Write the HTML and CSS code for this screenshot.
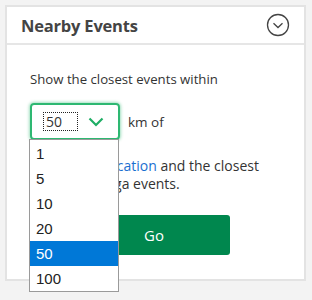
FILE: index.html
```html
<!DOCTYPE html>
<html>
<head>
<meta charset="utf-8">
<link rel="stylesheet" href="styles.css">
</head>
<body>
<div class="card">
  <div class="card-header">
    <h2 class="title">Nearby Events</h2>
    <svg class="toggle" width="24" height="24" viewBox="0 0 24 24">
      <circle cx="12" cy="12" r="10.5" fill="none" stroke="#444" stroke-width="1.3"/>
      <path d="M7.5 10.2 L12 14.5 L16.5 10.2" fill="none" stroke="#444" stroke-width="1.3"/>
    </svg>
  </div>
  <div class="card-body">
    <p class="intro">Show the closest events within</p>
    <div class="select-row">
      <div class="select-wrap">
        <div class="select">
          <span class="value">50</span>
          <svg class="chev" width="16" height="10" viewBox="0 0 16 10">
            <path d="M1.5 1.5 L8 8 L14.5 1.5" fill="none" stroke="#1fae65" stroke-width="2.2"/>
          </svg>
        </div>
        <ul class="dropdown">
          <li>1</li>
          <li>5</li>
          <li>10</li>
          <li>20</li>
          <li class="selected">50</li>
          <li>100</li>
        </ul>
      </div>
      <span class="unit">km of</span>
    </div>
    <p class="desc">your home <a href="#">location</a> and the closest upcoming yoga events.</p>
    <div class="actions">
      <button class="go">Go</button>
    </div>
  </div>
</div>
</body>
</html>
```
FILE: styles.css
```css
html, body {
  margin: 0;
  padding: 0;
}
body {
  background: #f3f3f3;
  padding: 5px;
  min-height: 300px;
  box-sizing: border-box;
  font-family: "Open Sans", "Segoe UI", sans-serif;
  color: #333;
}
.card {
  width: 297px;
  height: 272px;
  background: #fff;
  border: 2px solid #e3e3e3;
}
.card-header {
  height: 36px;
  display: flex;
  align-items: center;
  justify-content: space-between;
  padding: 0 14px 0 14px;
  border-bottom: 2px solid #e6e6e6;
}
.title {
  margin: 0;
  font-size: 16.5px;
  font-weight: 700;
  color: #444;
  letter-spacing: -0.2px;
}
.toggle {
  display: block;
}
.card-body {
  padding: 24px 23px;
}
.intro {
  margin: 0;
  font-size: 13.2px;
  line-height: 20px;
}
.select-row {
  display: flex;
  align-items: center;
  gap: 8px;
  margin-top: 14px;
}
.select-wrap {
  position: relative;
}
.select {
  box-sizing: border-box;
  width: 90px;
  height: 37px;
  border: 2px solid #2eb872;
  border-radius: 4px;
  box-shadow: 0 0 3px 1px rgba(46, 184, 114, 0.45);
  display: flex;
  align-items: center;
  justify-content: space-between;
  padding: 0 12px 0 12px;
}
.value {
  font-size: 14px;
  outline: 1px dotted #222;
  width: 33px;
  line-height: 17px;
  padding-left: 2px;
  box-sizing: border-box;
}
.chev {
  display: block;
  margin-right: 2px;
}
.unit {
  font-size: 13.5px;
}
.dropdown {
  position: absolute;
  left: -1px;
  top: 36px;
  width: 88px;
  margin: 0;
  padding: 1px 0 0 0;
  list-style: none;
  background: #fff;
  border: 1px solid #9a9a9a;
  z-index: 5;
  font-family: "Liberation Sans", Arial, sans-serif;
}
.dropdown li {
  height: 25px;
  line-height: 25px;
  padding-left: 6px;
  font-size: 15px;
  color: #222;
}
.dropdown li.selected {
  background: #0078d7;
  color: #fff;
}
.desc {
  margin: 17px 0 0 0;
  font-size: 14px;
  line-height: 18px;
}
.desc a {
  color: #1a6fd0;
  text-decoration: none;
}
.actions {
  margin-top: 22px;
  padding-left: 48px;
}
.go {
  width: 152px;
  height: 40px;
  background: #00874e;
  color: #fff;
  border: none;
  border-radius: 3px;
  font-family: "Open Sans", sans-serif;
  font-size: 15px;
}
```
